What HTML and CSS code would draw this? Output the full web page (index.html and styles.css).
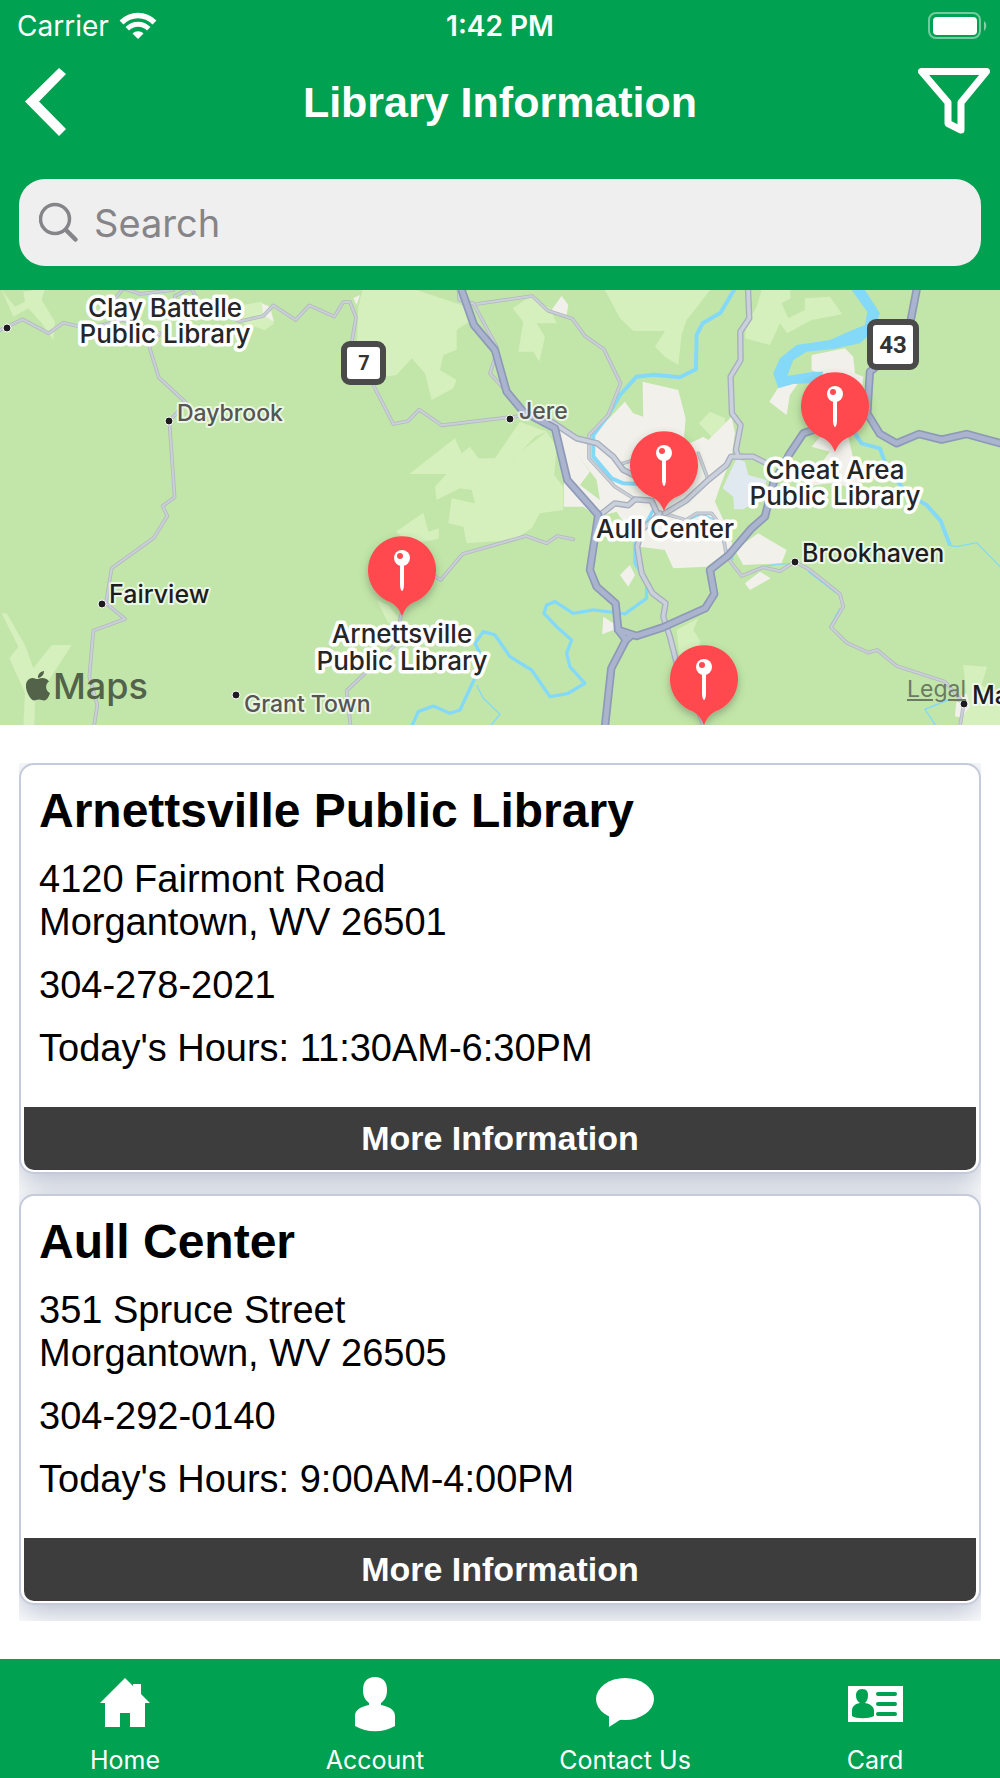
FILE: index.html
```html
<!DOCTYPE html>
<html lang="en">
<head>
    <meta charset="UTF-8">
    <meta name="viewport" content="width=device-width, initial-scale=1.0">
    <title>Library Information</title>
    <link rel="stylesheet" href="styles.css">
</head>
<body>
    <header>
        <div class="status-bar">
            <div class="carrier">
                <span>Carrier</span>
                <svg width="38" height="28" viewBox="0 0 38 28" fill="none" stroke="#fff">
                    <path d="M2.500 10.500C12 1.200 26 1.200 35.500 10.500" stroke-width="5.500"/>
                    <path d="M8.300 16.700C14.500 10.800 23.500 10.800 29.700 16.700" stroke-width="5"/>
                    <path d="M13.500 21.500C16.500 18.500 21.500 18.500 24.500 21.500L19 27Z" fill="#fff" stroke="none"/>
                </svg>
            </div>
            <span class="time">1:42 PM</span>
            <div class="battery">
                <svg width="60" height="28" viewBox="0 0 60 28">
                    <rect x="2" y="1" width="51" height="25" rx="7" fill="none" stroke="#fff" stroke-opacity=".45" stroke-width="2"/>
                    <rect x="6" y="5" width="44" height="18" rx="4" fill="#fff"/>
                    <path d="M57 9C60 11 60 16 57 19Z" fill="#fff" opacity=".5"/>
                </svg>
            </div>
        </div>
        <div class="title-bar">
            <button type="button" class="icon-button" aria-label="Back">
                <svg width="74" height="70" viewBox="0 0 74 70">
                    <path d="M51 1L58 7L31 34.500L58 62L51 69L17 34.500Z" fill="#fff"/>
                </svg>
            </button>
            <h1>Library Information</h1>
            <button type="button" class="icon-button" aria-label="Filter">
                <svg width="74" height="70" viewBox="0 0 74 70">
                    <path d="M3.500 4.500H68.500L43 35.500V63L30 56.500V35.500Z" fill="none" stroke="#fff" stroke-width="7" stroke-linejoin="round"/>
                </svg>
            </button>
        </div>
        <label class="search">
            <svg width="41" height="41" viewBox="0 0 41 41" fill="none" stroke="#858589" stroke-linecap="round">
                <circle cx="16" cy="17" r="14.500" stroke-width="3.500"/>
                <path d="M27 28L36.500 37.500" stroke-width="4.500"/>
            </svg>
            <input type="search" placeholder="Search" aria-label="Search">
        </label>
    </header>

    <section class="map" aria-label="Map of library locations">
        <svg class="map-canvas" viewBox="0 0 1000 435" preserveAspectRatio="xMidYMid slice">
            <defs>
                <filter id="pin-shadow" x="-30%" y="-20%" width="160%" height="150%">
                    <feDropShadow dx="0" dy="4" stdDeviation="4" flood-color="#3c503c" flood-opacity=".4"/>
                </filter>
                <g id="pin">
                    <path d="M0 0C-3 -7 -6 -11 -12 -14A34 34 0 1 1 12 -14C6 -11 3 -7 0 0Z" fill="#ff4a50" filter="url(#pin-shadow)"/>
                    <circle cy="-58" r="8" fill="#fff"/>
                    <circle cx="-2" cy="-60" r="3" fill="#ff4a50"/>
                    <path d="M-2 -51H2L2 -32C2 -28 1 -25 0 -25C-1 -25 -2 -28 -2 -32Z" fill="#fff"/>
                </g>
                <!-- terrain is drawn at three units to the pixel -->
                <g id="major-roads">
                    <path d="M1385 30L1422 135L1485 210L1520 335L1570 395L1665 445L1702 600L1795 705L1770 870L1790 920L1847 970L1855 1050L1878 1080L1834 1165L1815 1340"/>
                    <path d="M1855 1050L1910 1068L1990 1042L2116 985L2143 942L2130 870L2187 825L2255 745L2295 710L2320 610L2370 520L2410 460L2470 440"/>
                    <path d="M1878 1080L1895 1066"/>
                    <path d="M2752 20L2725 160L2690 210L2610 275L2602 400L2640 462L2690 490L2757 462L2825 479L2900 462L3010 492"/>
                </g>
                <g id="roads">
                    <path d="M2244 20L2248 115L2221 155L2222 240L2192 290L2196 400L2222 435L2208 510L2215 530L2260 530L2310 555"/>
                    <path d="M2225 530L2193 530L2180 555L2125 600L2058 662L1995 700"/>
                    <path d="M1655 425L1730 475L1792 490L1840 530L1870 570L1910 590"/>
                    <path d="M1800 705L1845 670L1885 676L1905 658L1955 662L1970 695"/>
                    <path d="M1980 700L1925 750L1912 800L1925 880L1958 940L1997 970L1990 1010L2010 1070L2030 1150"/>
                </g>
                <g id="minor-roads">
                    <path d="M0 150L68 118L146 160L190 128L260 145L370 120L480 160L448 200L476 292L560 370L508 422L524 652L488 678L502 708L462 773L335 865L318 970L375 1017L280 1052L268 1190L292 1275L282 1340"/>
                    <path d="M338 65L370 25L420 42L520 30M570 20L600 70L720 124L790 108L820 76L887 120L928 76L1003 110L1030 66L1050 66L1068 112L1055 190M520 95L525 48L570 25"/>
                    <path d="M1120 315L1180 432L1223 424L1258 389L1325 436L1560 408"/>
                    <path d="M1375 20L1378 60L1420 70L1490 200M1430 72L1597 48L1644 92L1717 116L1755 168L1812 208L1862 310L1825 405L1767 465L1767 535L1845 620L1905 658M1490 220L1470 280L1520 335"/>
                    <path d="M1720 778L1672 768L1640 790L1578 768L1388 822L1322 900L1290 880M1205 1000L1180 1100L1040 1232L1052 1340"/>
                    <path d="M1990 700L2058 720L2090 700L2135 700L2165 740L2180 830L2225 888L2290 862L2340 874L2385 845L2430 870L2520 942L2530 980L2493 1042L2540 1088L2605 1118L2632 1110L2690 1158L2835 1205L2892 1270L2880 1340M2125 600L2095 520M1862 552L1895 542M2040 1150L2110 1340"/>
                </g>
            </defs>
            <rect width="1000" height="435" fill="#c2e6a9"/>
            <g transform="scale(.3333) translate(0 -30)">
                <g fill="#d5efbd">
                    <path d="M5 30L40 110L85 85L125 130L160 180L165 125L125 60L135 25L70 35L75 65L45 80Z"/>
                    <path d="M5 1000L20 1000L75 1095L100 1165L155 1095H215L105 1265L103 1340H70L75 1240L28 1135L55 1100Z"/>
                    <path d="M1075 80L1090 20L1220 20L1400 80L1415 120L1370 150V210L1330 225L1320 270L1370 300L1360 325L1295 360L1275 280L1235 235L1190 285L1150 290L1070 220Z"/>
                    <path d="M1590 50L1650 85L1670 130L1610 130L1635 170L1618 245L1600 215L1555 215L1570 125L1538 85Z"/>
                    <path d="M1815 30L2130 30L2100 70L2060 120L2045 165L2035 255L1995 230L1965 200L1995 153H1900L1860 115Z"/>
                    <path d="M2285 30H2370L2372 55L2345 70L2365 115L2415 90V55L2490 50L2527 103L2435 120L2362 160L2340 130L2310 195L2235 175L2240 130L2270 80Z"/>
                    <path d="M1228 582L1365 475L1385 520L1410 500L1435 535H1485L1560 425L1640 455L1605 470L1540 540L1560 610L1595 620L1635 550L1690 620L1690 690L1620 700L1595 745L1540 780L1400 790L1390 740L1345 730L1355 655L1425 670L1415 630L1380 625L1310 660L1305 620L1340 582Z"/>
                    <path d="M1540 530L1640 455L1670 500L1660 620L1560 660Z"/>
                    <path d="M1188 755L1270 698L1285 755L1317 745V775L1300 780L1230 790Z"/>
                    <path d="M2097 430L2130 395L2175 415L2175 450L2150 485L2130 465Z"/>
                    <path d="M2030 1050L2095 1015L2080 1050L2102 1085L2090 1110L2040 1140Z"/>
                    <path d="M2890 1155L2962 1160L2945 1215L3010 1260V1340H2885L2900 1250Z"/>
                    <path d="M1130 960L1165 975L1200 1020L1165 1030Z"/>
                    <path d="M640 90L785 65L822 130L795 150L730 130Z"/>
                </g>
                <g fill="#f2f0eb">
                    <path d="M1780 465L1875 365L1900 400L1930 410L1928 305L2035 330L2057 415L2050 500L2110 470L2125 480L2195 410L2205 460L2195 530L2160 620L2145 665L2180 740L2200 800L2120 860L2020 865L1995 810L1920 800L1850 695L1790 710L1750 680H1692L1692 600L1670 490L1680 450L1760 480Z"/>
                    <path d="M2435 225L2535 205L2560 230L2565 280L2590 290L2585 340L2435 270Z"/>
                    <path d="M2340 315L2395 310L2370 345L2360 405L2308 365Z"/>
                    <path d="M2460 470H2545L2580 625L2490 610L2410 620L2490 515L2435 500Z"/>
                    <path d="M2205 810L2275 760L2360 810L2345 850L2230 855Z"/>
                    <path d="M2235 910L2280 875L2312 895L2250 930Z"/>
                    <path d="M1860 885L1890 855L1905 885L1885 920Z"/>
                    <path d="M1810 1010L1840 1030V1050L1807 1063Z"/>
                    <path d="M1655 90L1685 48L1705 75L1700 105Z"/>
                    <path d="M2865 1310L2870 1255L2900 1240L2910 1280L2885 1312Z"/>
                    <path d="M785 70L810 80L822 125L790 105ZM1060 55L1080 45L1070 75Z"/>
                </g>
                <path d="M1730 520L1790 600L1800 660L1740 615L1770 575Z" fill="#c2e6a9"/>
                <path d="M2198 560L2210 535L2235 545L2245 585L2300 600L2290 650L2230 688H2202L2200 650L2168 625Z" fill="#e0e8f0"/>
                <g fill="none" stroke="#84d9f8" stroke-width="12" stroke-linejoin="round">
                    <path d="M2208 20L2162 98L2108 130L2090 165L2088 268L2040 292L1960 284L1910 290L1860 345L1825 405L1780 465V530L1835 595L1870 610L1920 612"/>
                    <path d="M1960 690L1905 790V850L1940 905V955L1875 1002L1780 990L1720 1000L1665 965L1640 975L1632 1000L1670 1040L1715 1080L1700 1120L1710 1160L1755 1210L1705 1240L1650 1250L1595 1170L1530 1130L1485 1065L1450 1055L1425 1090L1450 1140L1415 1215L1380 1290L1350 1300L1300 1278L1255 1295L1235 1340" stroke-width="10"/>
                    <path d="M2558 450L2585 490L2640 505L2660 560L2720 640L2780 675L2822 722L2850 795" stroke-width="12"/>
                    <path d="M2065 720L2105 702L2145 720L2175 800L2200 840" stroke-width="5"/>
                </g>
                <g fill="none" stroke="#84d9f8" stroke-width="4">
                    <path d="M1430 1215L1450 1255L1500 1303L1470 1340M2285 860L2330 853L2385 850M2425 875L2510 940M2520 985L2490 1040L2535 1085M2900 1270L2850 1258L2775 1288L2810 1340M2845 795L2870 800L2930 788L3010 870"/>
                </g>
                <path d="M2548 20L2602 95L2595 135L2545 155L2490 180L2390 195L2340 235L2320 280L2335 325L2380 312L2460 308L2470 275L2440 275L2362 288L2380 240L2420 215L2500 207L2580 190L2620 155L2640 100L2595 30Z" fill="#84d9f8"/>
                <g fill="none" stroke-linejoin="round" stroke-linecap="round">
                    <use href="#minor-roads" stroke="#b2b9bf" stroke-width="11"/>
                    <use href="#minor-roads" stroke="#cbcfd9" stroke-width="6"/>
                    <use href="#roads" stroke="#a7aebd" stroke-width="19"/>
                    <use href="#roads" stroke="#cbd0dd" stroke-width="11"/>
                    <use href="#major-roads" stroke="#8d99b6" stroke-width="25"/>
                    <use href="#major-roads" stroke="#aab4ce" stroke-width="15"/>
                </g>
            </g>
            <g fill="#1d1d1f" stroke="#fff" stroke-width="1">
                <circle cx="7" cy="38" r="4"/>
                <circle cx="169" cy="131" r="4"/>
                <circle cx="102" cy="314" r="4"/>
                <circle cx="236" cy="405" r="4"/>
                <circle cx="510" cy="129" r="4"/>
                <circle cx="795" cy="272" r="4"/>
                <circle cx="964" cy="414" r="4"/>
            </g>
            <g fill="#fff" stroke="#4a4a4a" stroke-width="6">
                <rect x="344" y="54" width="39" height="38" rx="6"/>
                <rect x="870" y="32" width="46" height="45" rx="6"/>
            </g>
            <g class="route">
                <text x="364" y="80" font-size="20">7</text>
                <text x="893" y="63" font-size="24">43</text>
            </g>
            <use href="#pin" x="402" y="326"/>
            <use href="#pin" x="664" y="221"/>
            <use href="#pin" x="835" y="162"/>
            <use href="#pin" x="704" y="435"/>
            <g class="library">
                <text><tspan x="165" y="27">Clay Battelle</tspan><tspan x="165" y="53">Public Library</tspan></text>
                <text><tspan x="402" y="353">Arnettsville</tspan><tspan x="402" y="380">Public Library</tspan></text>
                <text x="665" y="248">Aull Center</text>
                <text><tspan x="835" y="189">Cheat Area</tspan><tspan x="835" y="215">Public Library</tspan></text>
            </g>
            <g class="town">
                <text x="109" y="313">Fairview</text>
                <text x="802" y="272">Brookhaven</text>
                <text x="972" y="414">Maidsville</text>
            </g>
            <g class="town village">
                <text x="177" y="131">Daybrook</text>
                <text x="519" y="129">Jere</text>
                <text x="244" y="422">Grant Town</text>
            </g>
        </svg>
        <div class="map-brand">
            <svg width="24" height="30" viewBox="0 0 24 30" fill="currentColor">
                <path d="M12 8C9 8 8 6.500 6 7C-1 8.500 -1.500 16 2 23C4 27 6 29.500 8 29.500C10 29.500 10.500 28.500 13 28.500C15 28.500 16 29.500 18 29.500C21 29.500 23 25 24 22C19.500 20 18.500 13.500 23 10.500C20 6.500 16 6.500 12 8ZM12 7C11.500 3.500 14.500 .5 18 0C18 4 15.500 6.500 12 7Z"/>
            </svg>
            <span>Maps</span>
        </div>
        <a href="#legal" class="legal">Legal</a>
    </section>

    <main>
        <div class="library-list">
            <article class="card">
                <div class="details">
                    <h2>Arnettsville Public Library</h2>
                    <p>4120 Fairmont Road<br>Morgantown, WV 26501</p>
                    <p>304-278-2021</p>
                    <p>Today's Hours: 11:30AM-6:30PM</p>
                </div>
                <button type="button" class="more">More Information</button>
            </article>
            <article class="card">
                <div class="details">
                    <h2>Aull Center</h2>
                    <p>351 Spruce Street<br>Morgantown, WV 26505</p>
                    <p>304-292-0140</p>
                    <p>Today's Hours: 9:00AM-4:00PM</p>
                </div>
                <button type="button" class="more">More Information</button>
            </article>
        </div>
    </main>

    <nav>
        <a href="#home">
            <svg width="60" height="60" viewBox="0 0 60 60" fill="#fff">
                <path d="M30 3L38 11V9H46V19L55 28H50V52H35V38H25V52H10V28H5Z"/>
            </svg>
            <span>Home</span>
        </a>
        <a href="#account">
            <svg width="60" height="60" viewBox="0 0 60 60" fill="#fff">
                <path d="M30 2C38 2 42 7 42 15C42 21 40 25 36 28V30C45 32 50 35 50 41V51C38 58 22 58 10 51V41C10 35 15 32 24 30V28C20 25 18 21 18 15C18 7 22 2 30 2Z"/>
            </svg>
            <span>Account</span>
        </a>
        <a href="#contact">
            <svg width="60" height="60" viewBox="0 0 60 60" fill="#fff">
                <ellipse cx="30" cy="24" rx="29" ry="21"/>
                <path d="M14 38V52L28 43Z"/>
            </svg>
            <span>Contact Us</span>
        </a>
        <a href="#card">
            <svg width="60" height="60" viewBox="0 0 60 60">
                <rect x="3" y="11" width="55" height="36" fill="#fff"/>
                <path d="M17 14C22 14 23 17 23 20C23 24 22 26 20 28C26 29 29 32 29 36V41C24 44 11 44 7 41V36C7 32 9 29 15 28C12 26 11 24 11 20C11 17 13 14 17 14Z" fill="#00a150"/>
                <path d="M33 19H50M33 29H50M33 39H50" stroke="#00a150" stroke-width="4" stroke-linecap="round"/>
            </svg>
            <span>Card</span>
        </a>
    </nav>
</body>
</html>
```
FILE: styles.css
```css
* {
    box-sizing: border-box;
}
body {
    margin: 0;
    min-height: 100vh;
    display: flex;
    flex-direction: column;
    font-family: "Liberation Sans", Arial, sans-serif;
    background-color: #fff;
    color: #000;
}
h1, h2, p {
    margin: 0;
}
button {
    border: none;
    font-family: inherit;
    cursor: pointer;
}
svg {
    display: block;
    flex-shrink: 0;
}

/* Header */
header {
    background-color: #00a150;
    color: #fff;
    padding-bottom: 24px;
}
.status-bar {
    display: grid;
    grid-template-columns: 1fr auto 1fr;
    align-items: center;
    height: 52px;
    padding: 0 13px;
    font-family: Inter, sans-serif;
    font-size: 28px;
}
.carrier {
    display: flex;
    align-items: center;
    gap: 10px;
    padding-left: 4px;
}
.time {
    font-weight: 600;
}
.battery {
    justify-self: end;
}
.title-bar {
    display: flex;
    align-items: center;
    justify-content: space-between;
    height: 100px;
    padding: 0 8px;
}
h1 {
    font-size: 43px;
    line-height: 50px;
}
.icon-button {
    padding: 0;
    background: none;
}
.search {
    display: flex;
    align-items: center;
    gap: 14px;
    height: 87px;
    margin: 27px 19px 0;
    padding: 0 20px;
    border-radius: 26px;
    background-color: #efefef;
}
.search input {
    flex: 1;
    min-width: 0;
    padding: 0;
    border: none;
    outline: none;
    background: none;
    font-family: Inter, sans-serif;
    font-size: 38px;
    color: #333;
}
.search input::placeholder {
    color: #858589;
}

/* Map */
.map {
    position: relative;
    height: 435px;
    overflow: hidden;
}
.map-canvas {
    width: 100%;
    height: 100%;
}
.map text {
    font-family: Inter, sans-serif;
    font-weight: 500;
    paint-order: stroke;
    stroke-linejoin: round;
}
.map .route text {
    fill: #333;
    font-family: Roboto, sans-serif;
    font-weight: 700;
    text-anchor: middle;
}
.library text {
    font-size: 26px;
    fill: #262628;
    stroke: #fff;
    stroke-width: 7px;
    text-anchor: middle;
}
.town text {
    font-size: 25px;
    fill: #1d1d1f;
    stroke: rgba(255, 255, 255, 0.7);
    stroke-width: 4px;
}
.village text {
    font-size: 23px;
    fill: #555;
}
.map-brand {
    position: absolute;
    left: 26px;
    bottom: 17px;
    display: flex;
    align-items: center;
    gap: 3px;
    font-family: Inter, sans-serif;
    font-size: 36px;
    font-weight: 500;
    line-height: 44px;
    color: #53634a;
}
.legal {
    position: absolute;
    right: 34px;
    bottom: 22px;
    font-family: Inter, sans-serif;
    font-size: 23px;
    line-height: 28px;
    color: #6b7a62;
}

/* Library cards */
main {
    flex: 1;
    padding: 38px 19px;
}
.library-list {
    display: flex;
    flex-direction: column;
    gap: 20px;
    padding-bottom: 16px;
    overflow: hidden;
}
.card {
    padding: 3px 3px 2px;
    border: 2px solid #c5cbda;
    border-radius: 15px;
    background-color: #fff;
    box-shadow: 0 8px 30px rgba(70, 90, 130, 0.4);
}
.details {
    display: flex;
    flex-direction: column;
    gap: 20px;
    padding: 15px 15px 37px;
}
h2 {
    font-size: 48px;
    line-height: 55px;
}
p {
    font-size: 38px;
    line-height: 43px;
}
.more {
    display: block;
    width: 100%;
    height: 63px;
    padding: 0;
    border-radius: 0 0 10px 10px;
    background-color: #3c3d3c;
    color: #fff;
    font-size: 34px;
    font-weight: bold;
}

/* Tab bar */
nav {
    display: grid;
    grid-template-columns: repeat(4, 1fr);
    height: 119px;
    background-color: #00a150;
}
nav a {
    display: flex;
    flex-direction: column;
    align-items: center;
    gap: 10px;
    padding-top: 16px;
    font-family: Inter, sans-serif;
    font-size: 25px;
    line-height: 30px;
    color: #fff;
    text-decoration: none;
}
```
